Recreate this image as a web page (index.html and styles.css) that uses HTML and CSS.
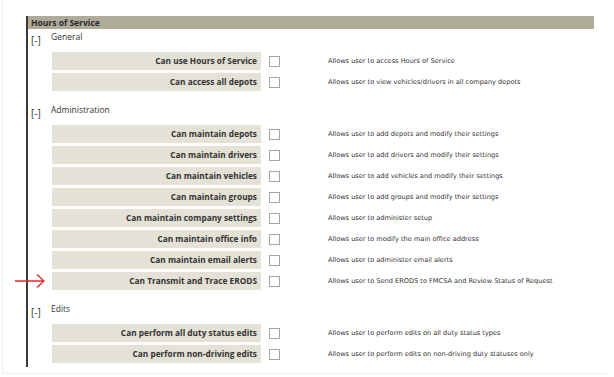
FILE: index.html
```html
<!DOCTYPE html>
<html lang="en">
<head>
  <meta charset="UTF-8" />
  <title>Permissions - Hours of Service</title>
  <link rel="stylesheet" href="styles.css">
</head>
<body>
  <div class="page">
    <div class="panel">
      <div class="panel-title">Hours of Service</div>

      <div class="group">
        <div class="group-head"><span class="toggle">[-]</span><span class="group-name">General</span></div>
        <div class="perm">
          <div class="perm-label">Can use Hours of Service</div>
          <div class="perm-check"><span class="box"></span></div>
          <div class="perm-desc">Allows user to access Hours of Service</div>
        </div>
        <div class="perm">
          <div class="perm-label">Can access all depots</div>
          <div class="perm-check"><span class="box"></span></div>
          <div class="perm-desc">Allows user to view vehicles/drivers in all company depots</div>
        </div>
      </div>

      <div class="group">
        <div class="group-head"><span class="toggle">[-]</span><span class="group-name">Administration</span></div>
        <div class="perm">
          <div class="perm-label">Can maintain depots</div>
          <div class="perm-check"><span class="box"></span></div>
          <div class="perm-desc">Allows user to add depots and modify their settings</div>
        </div>
        <div class="perm">
          <div class="perm-label">Can maintain drivers</div>
          <div class="perm-check"><span class="box"></span></div>
          <div class="perm-desc">Allows user to add drivers and modify their settings</div>
        </div>
        <div class="perm">
          <div class="perm-label">Can maintain vehicles</div>
          <div class="perm-check"><span class="box"></span></div>
          <div class="perm-desc">Allows user to add vehicles and modify their settings</div>
        </div>
        <div class="perm">
          <div class="perm-label">Can maintain groups</div>
          <div class="perm-check"><span class="box"></span></div>
          <div class="perm-desc">Allows user to add groups and modify their settings</div>
        </div>
        <div class="perm">
          <div class="perm-label">Can maintain company settings</div>
          <div class="perm-check"><span class="box"></span></div>
          <div class="perm-desc">Allows user to administer setup</div>
        </div>
        <div class="perm">
          <div class="perm-label">Can maintain office info</div>
          <div class="perm-check"><span class="box"></span></div>
          <div class="perm-desc">Allows user to modify the main office address</div>
        </div>
        <div class="perm">
          <div class="perm-label">Can maintain email alerts</div>
          <div class="perm-check"><span class="box"></span></div>
          <div class="perm-desc">Allows user to administer email alerts</div>
        </div>
        <div class="perm marked">
          <svg class="arrow" width="32" height="16" viewBox="0 0 32 16">
            <path d="M0 8H29M22 1.5L29 8L22 14.5" fill="none" stroke="#e8262a" stroke-width="1.3"/>
          </svg>
          <div class="perm-label">Can Transmit and Trace ERODS</div>
          <div class="perm-check"><span class="box"></span></div>
          <div class="perm-desc">Allows user to Send ERODS to FMCSA and Review Status of Request</div>
        </div>
      </div>

      <div class="group">
        <div class="group-head"><span class="toggle">[-]</span><span class="group-name">Edits</span></div>
        <div class="perm">
          <div class="perm-label">Can perform all duty status edits</div>
          <div class="perm-check"><span class="box"></span></div>
          <div class="perm-desc">Allows user to perform edits on all duty status types</div>
        </div>
        <div class="perm">
          <div class="perm-label">Can perform non-driving edits</div>
          <div class="perm-check"><span class="box"></span></div>
          <div class="perm-desc">Allows user to perform edits on non-driving duty statuses only</div>
        </div>
      </div>
    </div>
  </div>
</body>
</html>
```

FILE: styles.css
```css
body {
  margin: 0;
  background: #fff;
  font-family: 'Open Sans', sans-serif;
  color: #333;
}
.page {
  margin-left: 2px;
  border-left: 1px solid #ececec;
  border-bottom: 1px solid #f0f0f0;
  padding: 16px 0 6px 23px;
  width: 580px;
}
.panel {
  width: 566px;
  border-left: 2px solid #3a3a3a;
  padding-bottom: 1px;
}
.panel-title {
  height: 13px;
  line-height: 13px;
  background: #aeab98;
  padding-left: 3px;
  font-size: 8.5px;
  font-weight: 700;
  color: #2a2a2a;
}
.group {
  padding-bottom: 8px;
}
.group:last-child {
  padding-bottom: 0;
}
.group-head {
  display: flex;
  height: 23px;
  align-items: flex-start;
}
.toggle {
  width: 20px;
  padding: 4px 0 0 3px;
  font-size: 10px;
  color: #333;
}
.group-name {
  padding-top: 2px;
  font-size: 8.5px;
  color: #333;
}
.perm {
  position: relative;
  display: flex;
  align-items: center;
  height: 18px;
  margin-bottom: 3px;
}
.perm-label {
  width: 205px;
  margin-left: 24px;
  height: 18px;
  line-height: 17px;
  padding-right: 4px;
  background: #e4e2d6;
  text-align: right;
  font-size: 8.3px;
  font-weight: 700;
  color: #333;
}
.perm-check {
  width: 67px;
  display: flex;
  padding-left: 8px;
  box-sizing: border-box;
}
.box {
  width: 9px;
  height: 9px;
  border: 1px solid #a4a4a4;
  background: #fff;
  margin-top: 1px;
}
.perm-desc {
  font-family: 'DejaVu Sans', sans-serif;
  font-size: 6.6px;
  color: #333;
  white-space: nowrap;
}
.arrow {
  position: absolute;
  left: -13px;
  top: 1px;
}
```
